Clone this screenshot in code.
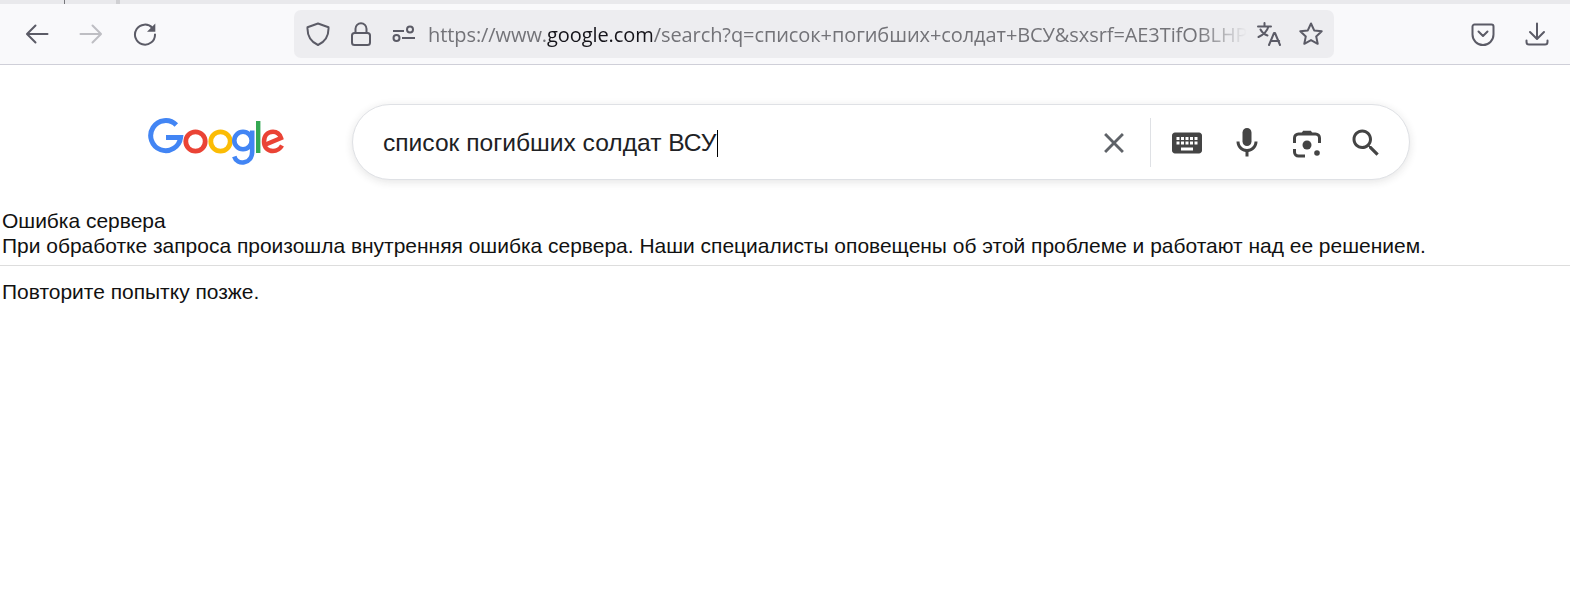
<div class="tabstrip">
  <span class="tab-edge"></span>
  <span class="tab-fade"></span>
</div>

<div class="toolbar">
  <div class="nav">
    <svg class="nav-icon" viewBox="0 0 24 24" fill="none" stroke="#5b5b66" stroke-width="2" stroke-linecap="round" stroke-linejoin="round"><path d="M22.500 12H2.500M10.500 3.500 2 12l8.500 8.500" /></svg>
    <svg class="nav-icon" viewBox="0 0 24 24" fill="none" stroke="#bebec3" stroke-width="2" stroke-linecap="round" stroke-linejoin="round"><path d="M1.500 12h20M13.500 3.500 22 12l-8.500 8.500" /></svg>
    <svg class="nav-icon" viewBox="0 0 24 24" fill="none" stroke="#5b5b66" stroke-width="2" stroke-linecap="round"><path d="M19.500 6A10 10 0 1 0 22 12.500" /><path d="M22.300 1.500v8.300H14z" fill="#5b5b66" stroke="none" /></svg>
  </div>

  <div class="urlbar">
    <svg class="ff-icon shield" viewBox="0 0 24 24" fill="none" stroke="#5b5b66" stroke-width="2" stroke-linejoin="round"><path d="M12 1.500 22.500 5.200c.4 8.500-2.600 14.300-10.500 17.800C4.100 19.500 1.100 13.700 1.500 5.200z" /></svg>
    <svg class="ff-icon lock" viewBox="0 0 24 24" fill="none" stroke="#5b5b66" stroke-width="2"><rect x="3" y="11" width="18" height="12" rx="2.500" /><path d="M6.500 11V6.800a5.500 5.500 0 0 1 11 0V11" /></svg>
    <svg class="ff-icon perms" viewBox="0 0 24 24" fill="none" stroke="#5b5b66" stroke-width="2"><path d="M1 9h11M10 16h13" /><circle cx="18" cy="7.500" r="3" /><circle cx="4.500" cy="16" r="3" /></svg>
    <div class="url"><span>https://www.</span><b>google.com</b><span>/search?q=список+погибших+солдат+ВСУ&amp;sxsrf=AE3TifOBLHP</span></div>
    <svg class="ff-icon translate" viewBox="0 0 24 24" fill="none" stroke="#5b5b66" stroke-width="2" stroke-linecap="round" stroke-linejoin="round"><path d="M1 4.500h13M7.500 1v3.500M11.500 4.500C10 9.500 6 13 1.500 15M3.500 7.500c1.500 3 4 5 7 6" /><path d="M12 23l5-12h1l5 12M13.800 19h8.400" /></svg>
    <svg class="ff-icon star" viewBox="0 0 24 24" fill="none" stroke="#5b5b66" stroke-width="2" stroke-linejoin="round"><path d="M12 1.500l3.200 6.900 7.500.9-5.500 5.100 1.500 7.400L12 18.100l-6.700 3.700 1.500-7.400L1.300 9.300l7.500-.9z" /></svg>
  </div>

  <div class="actions">
    <svg class="ff-icon pocket" viewBox="0 0 24 24" fill="none" stroke="#5b5b66" stroke-width="2" stroke-linecap="round" stroke-linejoin="round"><path d="M3.500 2.500h17a2 2 0 0 1 2 2v8a10.500 10.500 0 0 1-21 0v-8a2 2 0 0 1 2-2z" /><path d="M7.500 9.500 12 14l4.500-4.500" /></svg>
    <svg class="ff-icon download" viewBox="0 0 24 24" fill="none" stroke="#5b5b66" stroke-width="2" stroke-linecap="round" stroke-linejoin="round"><path d="M12 1.500v15M5 10l7 7 7-7M1.500 18.500v1.500a2.500 2.500 0 0 0 2.500 2.500h16a2.500 2.500 0 0 0 2.500-2.500v-1.500" /></svg>
  </div>
</div>

<header class="search-head">
  <svg class="logo" viewBox="0 0 136 48" fill="none" role="img" aria-label="Google">
    <path d="M28.300 7A15 15 0 1 0 32.600 19.500H18" stroke="#4285f4" stroke-width="5" />
    <circle cx="47.500" cy="23.500" r="9.700" stroke="#ea4335" stroke-width="4.800" />
    <circle cx="72.500" cy="23.500" r="9.700" stroke="#fbbc05" stroke-width="4.800" />
    <circle cx="95" cy="22.500" r="8.700" stroke="#4285f4" stroke-width="4.600" />
    <path d="M104.200 12.500V33.500C104.200 46.500 89 47.800 86.300 38.500" stroke="#4285f4" stroke-width="4.600" />
    <rect x="108" y="3" width="4.400" height="32" fill="#34a853" />
    <path d="M116.500 27 133 20C131.500 15.500 128 13.800 125 13.800 119.500 13.800 116 18 116 23.700 116 29.500 120 33 125 33 129 33 132 31 134 27.500" stroke="#ea4335" stroke-width="4.500" />
  </svg>

  <div class="searchbox">
    <div class="query">список погибших солдат ВСУ<span class="caret"></span></div>
    <svg class="g-icon close" viewBox="0 0 24 24" fill="#5f6368"><path d="M19 6.410L17.590 5 12 10.590 6.410 5 5 6.410 10.590 12 5 17.590 6.410 19 12 13.410 17.590 19 19 17.590 13.410 12z" /></svg>
    <span class="sep"></span>
    <svg class="g-icon" viewBox="0 0 24 24" fill="#444"><path d="M20 5H4c-1.100 0-1.990.9-1.990 2L2 17c0 1.100.9 2 2 2h16c1.100 0 2-.9 2-2V7c0-1.100-.9-2-2-2zm-9 3h2v2h-2V8zm0 3h2v2h-2v-2zM8 8h2v2H8V8zm0 3h2v2H8v-2zm-1 2H5v-2h2v2zm0-3H5V8h2v2zm9 7H8v-2h8v2zm0-4h-2v-2h2v2zm0-3h-2V8h2v2zm3 3h-2v-2h2v2zm0-3h-2V8h2v2z" /></svg>
    <svg class="g-icon" viewBox="0 0 24 24" fill="#444"><path d="M12 14c1.660 0 3-1.340 3-3V5c0-1.660-1.340-3-3-3S9 3.340 9 5v6c0 1.660 1.340 3 3 3z" /><path d="M17 11c0 2.760-2.240 5-5 5s-5-2.240-5-5H5c0 3.530 2.610 6.430 6 6.920V21h2v-3.080c3.390-.49 6-3.390 6-6.920h-2z" /></svg>
    <svg class="g-icon" viewBox="0 0 36 36" fill="none" stroke="#444" stroke-width="3"><path d="M5.500 18V13a4 4 0 0 1 4-4h17a4 4 0 0 1 4 4v5M5.500 24v3a4 4 0 0 0 4 4H16" /><path d="M13 9l1.500-2.500h7L23 9" fill="#444" stroke-width="1.500" /><circle cx="18" cy="20" r="4.500" fill="#444" stroke="none" /><circle cx="28" cy="28" r="2.800" fill="#444" stroke="none" /></svg>
    <svg class="g-icon magnifier" viewBox="0 0 24 24" fill="#444"><path d="M15.500 14h-.79l-.28-.27C15.410 12.590 16 11.110 16 9.500 16 5.910 13.090 3 9.500 3S3 5.910 3 9.500 5.910 16 9.500 16c1.610 0 3.090-.59 4.230-1.570l.27.28v.79l5 4.990L20.490 19l-4.990-5zm-6 0C7.010 14 5 11.990 5 9.500S7.010 5 9.500 5 14 7.010 14 9.500 11.990 14 9.500 14z" /></svg>
  </div>
</header>

<main class="error">
  <div>Ошибка сервера</div>
  <div>При обработке запроса произошла внутренняя ошибка сервера. Наши специалисты оповещены об этой проблеме и работают над ее решением.</div>
  <hr />
  <div>Повторите попытку позже.</div>
</main>

<style>
  :global(body) {
    background: #fff;
    font-family: "Liberation Sans", Arial, sans-serif;
  }
  .tabstrip {
    position: relative;
    height: 4px;
    background: #e9e9ec;
  }
  .tab-edge {
    position: absolute;
    left: 64px;
    top: 0;
    width: 1px;
    height: 4px;
    background: #77777c;
  }
  .tab-fade {
    position: absolute;
    left: 116px;
    top: 0;
    width: 4px;
    height: 4px;
    background: #d0d0d3;
  }
  .toolbar {
    display: flex;
    align-items: center;
    height: 60px;
    background: #f9f9fb;
    border-bottom: 1px solid #cfcfd8;
  }
  .nav {
    display: flex;
    align-items: center;
    gap: 30px;
    padding-left: 25px;
    width: 269px;
  }
  .nav-icon {
    width: 24px;
    height: 24px;
    flex: none;
  }
  .urlbar {
    display: flex;
    align-items: center;
    width: 1040px;
    height: 48px;
    background: #ededf0;
    border-radius: 7px;
    flex: none;
    box-sizing: border-box;
    padding-left: 12px;
  }
  .ff-icon {
    width: 24px;
    height: 24px;
    flex: none;
  }
  .lock {
    margin-left: 19px;
  }
  .perms {
    margin-left: 19px;
  }
  .url {
    width: 819px;
    margin-left: 12px;
    white-space: nowrap;
    overflow: hidden;
    font-family: "Open Sans", sans-serif;
    font-size: 20px;
    letter-spacing: -0.08px;
    color: #737378;
    -webkit-mask-image: linear-gradient(to right, #000 94%, transparent 100%);
    mask-image: linear-gradient(to right, #000 94%, transparent 100%);
  }
  .url b {
    font-weight: 400;
    color: #15141a;
  }
  .translate {
    margin-left: 10px;
  }
  .star {
    margin-left: 18px;
  }
  .actions {
    display: flex;
    align-items: center;
    gap: 30px;
    margin-left: 137px;
  }
  .search-head {
    display: flex;
    align-items: flex-start;
    height: 120px;
    padding-left: 148px;
  }
  .logo {
    width: 136px;
    height: 48px;
    flex: none;
    margin-top: 53px;
  }
  .searchbox {
    display: flex;
    align-items: center;
    gap: 24px;
    width: 1058px;
    height: 76px;
    margin-left: 68px;
    margin-top: 39px;
    box-sizing: border-box;
    padding: 2px 25px 0 30px;
    background: #fff;
    border: 1px solid #dfe1e5;
    border-radius: 38px;
    box-shadow: 0 2px 8px rgba(32, 33, 36, 0.12);
  }
  .query {
    flex: 1;
    display: flex;
    align-items: center;
    font-size: 24.600px;
    color: #202124;
    white-space: nowrap;
  }
  .caret {
    display: inline-block;
    width: 1px;
    height: 27px;
    margin-left: 1px;
    background: #000;
  }
  .g-icon {
    width: 36px;
    height: 36px;
    flex: none;
  }
  .close {
    width: 34px;
    height: 34px;
    margin-right: -5px;
  }
  .sep {
    width: 1px;
    height: 49px;
    background: #dfe1e5;
    flex: none;
    margin-right: -6px;
    margin-top: -2px;
  }
  .magnifier {
    margin-left: -1px;
  }
  .error {
    padding: 23px 2px 0;
    font-size: 20.970px;
    line-height: 25px;
    color: #111;
  }
  hr {
    margin: 7px -2px 13px;
    border: none;
    border-top: 1px solid #ddd;
  }
</style>
